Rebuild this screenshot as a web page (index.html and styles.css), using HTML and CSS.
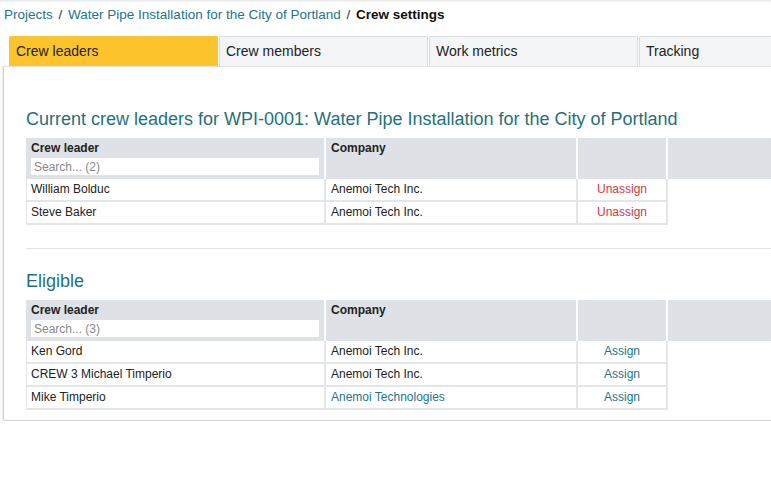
FILE: index.html
```html
<!DOCTYPE html>
<html lang="en">
<head>
    <meta charset="UTF-8">
    <title>Crew settings</title>
    <link rel="stylesheet" href="styles.css">
</head>
<body>
    <div class="breadcrumb">
        <a href="#">Projects</a>
        <span class="sep">/</span>
        <a href="#">Water Pipe Installation for the City of Portland</a>
        <span class="sep">/</span>
        <strong>Crew settings</strong>
    </div>

    <div class="tabs">
        <div class="tab active">Crew leaders</div>
        <div class="tab">Crew members</div>
        <div class="tab">Work metrics</div>
        <div class="tab">Tracking</div>
    </div>

    <div class="panel">
        <h2 class="section-title">Current crew leaders for WPI-0001: Water Pipe Installation for the City of Portland</h2>
        <table class="crew-table">
            <thead>
                <tr>
                    <th class="col-name">Crew leader<input type="text" placeholder="Search... (2)"></th>
                    <th class="col-company">Company</th>
                    <th class="col-action"></th>
                    <th class="col-extra"></th>
                </tr>
            </thead>
            <tbody>
                <tr>
                    <td>William Bolduc</td>
                    <td>Anemoi Tech Inc.</td>
                    <td class="action"><a href="#" class="unassign">Unassign</a></td>
                    <td class="empty"></td>
                </tr>
                <tr>
                    <td>Steve Baker</td>
                    <td>Anemoi Tech Inc.</td>
                    <td class="action"><a href="#" class="unassign">Unassign</a></td>
                    <td class="empty"></td>
                </tr>
            </tbody>
        </table>

        <hr class="divider">

        <h2 class="section-title eligible">Eligible</h2>
        <table class="crew-table">
            <thead>
                <tr>
                    <th class="col-name">Crew leader<input type="text" placeholder="Search... (3)"></th>
                    <th class="col-company">Company</th>
                    <th class="col-action"></th>
                    <th class="col-extra"></th>
                </tr>
            </thead>
            <tbody>
                <tr>
                    <td>Ken Gord</td>
                    <td>Anemoi Tech Inc.</td>
                    <td class="action"><a href="#">Assign</a></td>
                    <td class="empty"></td>
                </tr>
                <tr>
                    <td>CREW 3 Michael Timperio</td>
                    <td>Anemoi Tech Inc.</td>
                    <td class="action"><a href="#">Assign</a></td>
                    <td class="empty"></td>
                </tr>
                <tr>
                    <td>Mike Timperio</td>
                    <td><a href="#">Anemoi Technologies</a></td>
                    <td class="action"><a href="#">Assign</a></td>
                    <td class="empty"></td>
                </tr>
            </tbody>
        </table>
    </div>
</body>
</html>
```

FILE: styles.css
```css
/* Global */
html, body {
    margin: 0;
    padding: 0;
    overflow: hidden;
}

body {
    background: #fff;
    font-family: "Liberation Sans", Arial, sans-serif;
    color: #222;
    box-shadow: inset 0 3px 3px -2px rgba(0, 0, 0, 0.12);
}

a {
    color: #23758a;
    text-decoration: none;
}

/* Breadcrumb */
.breadcrumb {
    padding: 6px 4px 0;
    height: 30px;
    font-size: 13.5px;
    line-height: 17px;
    white-space: nowrap;
}

.breadcrumb .sep {
    color: #333;
    margin: 0 2px;
}

.breadcrumb strong {
    color: #111;
}

/* Tabs */
.tabs {
    display: flex;
    gap: 1px;
    margin-left: 9px;
    width: 900px;
}

.tab {
    flex: 0 0 209px;
    height: 30px;
    line-height: 29px;
    padding-left: 6px;
    box-sizing: border-box;
    font-size: 14px;
    color: #222;
    background: #f4f5f6;
    border: 1px solid #dcdcdc;
    border-bottom: none;
    border-radius: 2px 2px 0 0;
}

.tab.active {
    background: #fec42d;
    border-color: #fec42d;
}

/* Panel */
.panel {
    margin-left: 3px;
    width: 900px;
    padding: 42px 22px 10px;
    border: 1px solid #d2d2d2;
    border-top-color: #e2e2e2;
    border-radius: 0 0 4px 4px;
    box-shadow: 0 1px 3px rgba(0, 0, 0, 0.18);
}

.section-title {
    margin: 0 0 8px;
    font-size: 18px;
    line-height: 21px;
    font-weight: normal;
    color: #1f717c;
}

.section-title.eligible {
    margin-top: 22px;
}

.divider {
    border: none;
    border-top: 1px solid #e3e3e3;
    margin: 23px 0 0;
}

/* Tables */
.crew-table {
    border-collapse: separate;
    border-spacing: 0;
    font-size: 12px;
    width: 760px;
}

.crew-table th {
    background: #dee1e5;
    text-align: left;
    vertical-align: top;
    font-weight: bold;
    height: 40px;
    padding: 3px 5px 4px;
    box-sizing: border-box;
    border-right: 2px solid #fff;
    color: #222;
}

.crew-table th input {
    display: block;
    width: 288px;
    height: 17px;
    box-sizing: border-box;
    margin-top: 3px;
    border: none;
    padding: 0 3px;
    font-family: inherit;
    font-size: 12px;
    background: #fff;
}

.crew-table th input::placeholder {
    color: #8a8a8a;
}

.col-name { width: 300px; }
.col-company { width: 252px; }
.col-action { width: 90px; }

.crew-table td {
    height: 23px;
    padding: 0 5px;
    box-sizing: border-box;
    border-right: 2px solid #e3e6e9;
    border-bottom: 2px solid #e3e6e9;
    line-height: 21px;
    color: #222;
}

.crew-table td:first-child {
    border-left: 1px solid #e3e6e9;
    padding-left: 4px;
}

.crew-table td.action {
    text-align: center;
}

.crew-table td.empty {
    border: none;
}

.unassign {
    color: #d0393f;
}
```
